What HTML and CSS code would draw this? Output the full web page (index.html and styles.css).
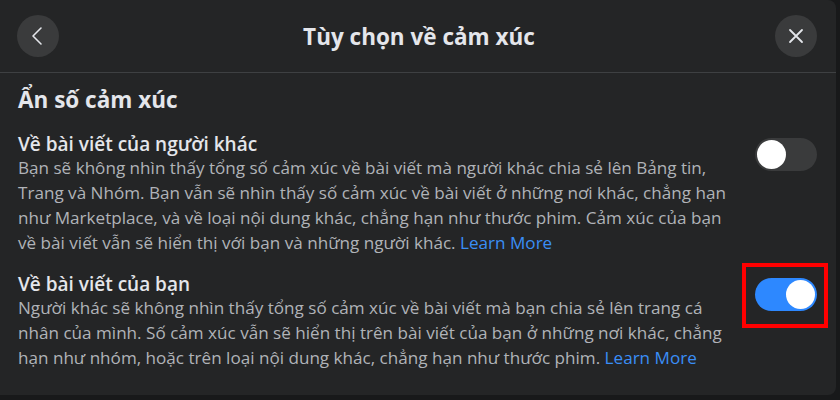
FILE: index.html
```html
<!DOCTYPE html>
<html lang="vi">
<head>
    <meta charset="UTF-8">
    <title>Tùy chọn về cảm xúc</title>
    <link rel="stylesheet" href="styles.css">
</head>
<body>
    <div class="dialog">
        <div class="dialog-header">
            <button class="round-btn" aria-label="Quay lại">
                <svg width="20" height="20" viewBox="0 0 20 20"><path d="M13 2 L5 10 L13 18" fill="none" stroke="#e4e6eb" stroke-width="1.6" stroke-linecap="round" stroke-linejoin="round"/></svg>
            </button>
            <h1>Tùy chọn về cảm xúc</h1>
            <button class="round-btn" aria-label="Đóng">
                <svg width="20" height="20" viewBox="0 0 20 20"><path d="M4 4 L16 16 M16 4 L4 16" fill="none" stroke="#e4e6eb" stroke-width="1.8" stroke-linecap="round"/></svg>
            </button>
        </div>

        <div class="dialog-body">
            <h2>Ẩn số cảm xúc</h2>

            <div class="option">
                <div class="option-text">
                    <h3>Về bài viết của người khác</h3>
                    <p>Bạn sẽ không nhìn thấy tổng số cảm xúc về bài viết mà người khác chia sẻ lên Bảng tin,<br>
                    Trang và Nhóm. Bạn vẫn sẽ nhìn thấy số cảm xúc về bài viết ở những nơi khác, chẳng hạn<br>
                    như Marketplace, và về loại nội dung khác, chẳng hạn như thước phim. Cảm xúc của bạn<br>
                    về bài viết vẫn sẽ hiển thị với bạn và những người khác. <a href="#">Learn More</a></p>
                </div>
                <div class="switch-wrap">
                    <span class="switch"></span>
                </div>
            </div>

            <div class="option">
                <div class="option-text">
                    <h3>Về bài viết của bạn</h3>
                    <p>Người khác sẽ không nhìn thấy tổng số cảm xúc về bài viết mà bạn chia sẻ lên trang cá<br>
                    nhân của mình. Số cảm xúc vẫn sẽ hiển thị trên bài viết của bạn ở những nơi khác, chẳng<br>
                    hạn như nhóm, hoặc trên loại nội dung khác, chẳng hạn như thước phim. <a href="#">Learn More</a></p>
                </div>
                <div class="switch-wrap marked">
                    <span class="switch on"></span>
                </div>
            </div>
        </div>
    </div>
</body>
</html>
```

FILE: styles.css
```css
* {
    margin: 0;
    padding: 0;
    box-sizing: border-box;
    font-family: 'Open Sans', 'Noto Sans', sans-serif;
}

body {
    background: #18191a;
    width: 840px;
    height: 400px;
    overflow: hidden;
}

.dialog {
    width: 836px;
    height: 395px;
    background: #242526;
    border-radius: 0 8px 8px 0;
}

.dialog-header {
    height: 73px;
    display: flex;
    align-items: center;
    justify-content: space-between;
    padding: 0 19px 0 17px;
    border-bottom: 1px solid #3e4042;
}

.dialog-header h1 {
    color: #e4e6eb;
    font-size: 22.5px;
    font-weight: 700;
    margin-left: 4px;
}

.round-btn {
    width: 42px;
    height: 42px;
    border-radius: 50%;
    border: none;
    background: #3a3b3c;
    display: flex;
    align-items: center;
    justify-content: center;
    cursor: pointer;
}

.dialog-body {
    padding: 12px 19px 0 18px;
}

.dialog-body h2 {
    color: #e4e6eb;
    font-size: 22.5px;
    font-weight: 700;
    line-height: 30px;
    margin-bottom: 18px;
}

.option {
    display: flex;
    justify-content: space-between;
    margin-bottom: 18px;
}

.option h3 {
    color: #e4e6eb;
    font-size: 19px;
    font-weight: 600;
    line-height: 22px;
}

.option p {
    color: #b0b3b8;
    font-size: 17.1px;
    line-height: 25px;
    white-space: nowrap;
}

.option p a {
    color: #3a8ef6;
    text-decoration: none;
}

/* fixed box around the switch so both rows line up */
.switch-wrap {
    width: 86px;
    height: 65px;
    padding: 11px 0 0 9px;
    margin-top: -10px;
    margin-right: -11px;
    border: 4px solid transparent;
}

.switch-wrap.marked {
    border-color: #ff0000;
}

.switch {
    position: relative;
    display: block;
    width: 62px;
    height: 33px;
    border-radius: 17px;
    background: #3a3b3c;
}

.switch::after {
    content: '';
    position: absolute;
    top: 2px;
    left: 2px;
    width: 29px;
    height: 29px;
    border-radius: 50%;
    background: #fff;
}

.switch.on {
    background: #2d88ff;
}

.switch.on::after {
    left: 31px;
}
```
